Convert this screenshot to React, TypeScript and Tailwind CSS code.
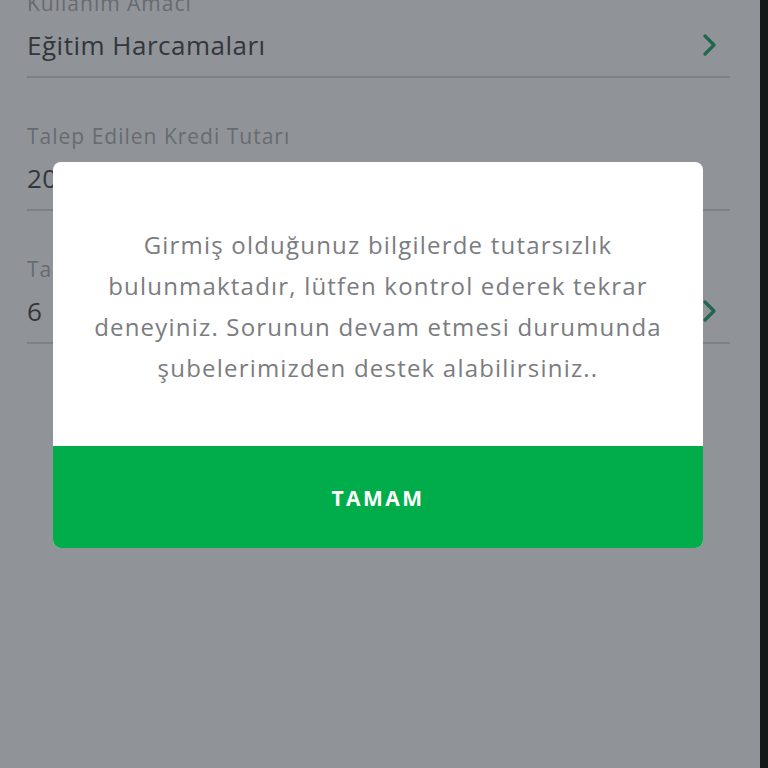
import React from "react";

const Chevron = () => (
  <svg width="16" height="22" viewBox="0 0 16 22" fill="none">
    <path d="M3 2l9 9-9 9" stroke="#22664f" strokeWidth="3.2" strokeLinecap="round" strokeLinejoin="round" />
  </svg>
);

const Field = ({ label, value, chevron }: { label: string; value: string; chevron?: boolean }) => (
  <div className="flex flex-col">
    <div className="h-[48px] flex items-end text-[21px] leading-[22px] tracking-[1px] text-[#676b70]">{label}</div>
    <div className="flex h-[62px] items-center justify-between">
      <span className="text-[26px] tracking-[0.5px] text-[#33363a]">{value}</span>
      {chevron && (
        <span className="mr-[12px]">
          <Chevron />
        </span>
      )}
    </div>
    <div className="h-[2px] bg-[#7d8186]" />
  </div>
);

export default function App() {
  return (
    <div className="flex h-[768px] w-[768px] overflow-hidden" style={{ fontFamily: "'Open Sans', Lato, sans-serif" }}>
      <div className="relative h-full w-[760px] bg-[#909498]">
        <div className="mt-[-34px] flex flex-col gap-[21px] pl-[27px] pr-[30px]">
          <Field label="Kullanım Amacı" value="Eğitim Harcamaları" chevron />
          <Field label="Talep Edilen Kredi Tutarı" value="20.000 TL" />
          <Field label="Talep Edilen Vade" value="6" chevron />
        </div>

        <div className="absolute left-[53px] top-[162px] w-[650px] overflow-hidden rounded-[8px] bg-white">
          <p className="pt-[62px] pb-[58px] text-center text-[24px] leading-[41px] tracking-[1.2px] text-[#7a7c80]">
            Girmiş olduğunuz bilgilerde tutarsızlık
            <br />
            bulunmaktadır, lütfen kontrol ederek tekrar
            <br />
            deneyiniz. Sorunun devam etmesi durumunda
            <br />
            şubelerimizden destek alabilirsiniz..
          </p>
          <button className="flex h-[102px] w-full items-center justify-center bg-[#00ad4a] pt-[4px] text-[21px] font-bold tracking-[2.5px] text-white">
            TAMAM
          </button>
        </div>
      </div>
      <div className="h-full flex-1 bg-[#14181b]" />
    </div>
  );
}
